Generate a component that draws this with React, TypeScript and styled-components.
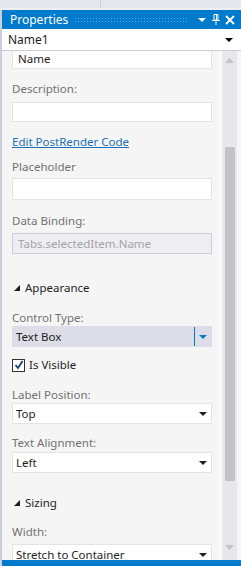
import React from 'react';
import styled, { createGlobalStyle } from 'styled-components';

const GlobalStyle = createGlobalStyle`
    html, body {
        margin: 0;
        padding: 0;
        background: #eeeef2;
    }
    * {
        box-sizing: border-box;
    }
`;

const FONT = `'Noto Sans', 'Open Sans', sans-serif`;
const SIZE = '11.5px';

const Window = styled.div`
    width: 241px;
    height: 566px;
    display: flex;
    flex-direction: column;
    font-family: ${FONT};
    overflow: hidden;
    background: #eeeef2;
`;

const TopStrip = styled.div`
    height: 10px;
    display: flex;
    background: #e6e7ed;
    border-bottom: 2px solid #eeeef2;
`;

const TopTab = styled.div`
    width: 101px;
    border-right: 1px solid #cccedb;
`;

const Panel = styled.div`
    flex: 1;
    display: flex;
    flex-direction: column;
    border-left: 2px solid #cccedb;
    min-height: 0;
`;

const TitleBar = styled.div`
    height: 19px;
    background: #007acc;
    display: flex;
    align-items: center;
    padding: 0 4px 0 8px;
    color: #fff;
`;

const Title = styled.span`
    font-size: 12px;
    line-height: 19px;
    margin-right: 6px;
`;

const Grip = styled.div`
    flex: 1;
    height: 5px;
    margin-right: 6px;
    background-image: radial-gradient(circle, #5ea9e0 0.6px, transparent 0.9px);
    background-size: 3px 3px;
`;

const TitleIcon = styled.div`
    width: 14px;
    height: 19px;
    display: flex;
    align-items: center;
    justify-content: center;
`;

const ObjectCombo = styled.div`
    height: 22px;
    background: #fff;
    border-bottom: 1px solid #cccedb;
    display: flex;
    align-items: center;
    justify-content: space-between;
    padding: 0 8px 0 6px;
    font-size: 12px;
    color: #1e1e1e;
`;

const Body = styled.div`
    flex: 1;
    display: flex;
    min-height: 0;
    background: #f5f5f5;
`;

const Scroller = styled.div`
    flex: 1;
    overflow: hidden;
    padding: 0 7px 0 10px;
`;

const ScrollBar = styled.div`
    width: 22px;
    display: flex;
    flex-direction: column;
    align-items: center;
    justify-content: space-between;
    padding: 7px 0 10px;
    border-left: 3px solid #fafafa;
    border-right: 4px solid #f5f5f5;
    background: #e8e8ec;
`;

const Thumb = styled.div`
    width: 10px;
    height: 334px;
    margin-top: 84px;
    margin-bottom: auto;
    background: #c2c3c9;
    border-radius: 1px;
`;

const Stack = styled.div<{ $offset: number }>`
    display: flex;
    flex-direction: column;
    margin-top: ${(p) => p.$offset}px;
`;

const Label = styled.div<{ $mt?: number; $mb?: number }>`
    font-size: ${SIZE};
    line-height: 16px;
    color: #717171;
    margin-top: ${(p) => p.$mt ?? 0}px;
    margin-bottom: ${(p) => p.$mb ?? 0}px;
`;

const Input = styled.div<{ $disabled?: boolean; $h?: number }>`
    height: ${(p) => p.$h ?? 21}px;
    background: ${(p) => (p.$disabled ? '#eeeef2' : '#ffffff')};
    border: 1px solid ${(p) => (p.$disabled ? '#cccedb' : '#e3e3e8')};
    font-size: ${SIZE};
    color: ${(p) => (p.$disabled ? '#a2a4a5' : '#1e1e1e')};
    padding: 0 5px;
    display: flex;
    align-items: center;
    flex-shrink: 0;
`;

const Select = styled.div<{ $active?: boolean }>`
    height: 21px;
    flex-shrink: 0;
    background: ${(p) => (p.$active ? '#dcdde6' : '#ffffff')};
    border: 1px solid ${(p) => (p.$active ? '#dcdde6' : '#e3e3e8')};
    font-size: ${SIZE};
    color: #1e1e1e;
    display: flex;
    align-items: center;
    padding-left: 3px;
`;

const SelectText = styled.span`
    flex: 1;
`;

const SelectButton = styled.div<{ $active?: boolean }>`
    width: 16px;
    height: 100%;
    display: flex;
    align-items: center;
    justify-content: center;
    border-left: 1px solid ${(p) => (p.$active ? '#007acc' : 'transparent')};
    margin-right: 1px;
`;

const Link = styled.a<{ $mt: number }>`
    font-size: ${SIZE};
    line-height: 16px;
    color: #1e6fb8;
    text-decoration: underline;
    margin-top: ${(p) => p.$mt}px;
`;

const Section = styled.div<{ $mt: number }>`
    display: flex;
    align-items: center;
    gap: 5px;
    padding-left: 2px;
    margin-top: ${(p) => p.$mt}px;
    font-size: ${SIZE};
    line-height: 16px;
    color: #1e1e1e;
`;

const CheckRow = styled.label`
    display: flex;
    align-items: center;
    gap: 4px;
    margin-top: 10px;
    font-size: ${SIZE};
    line-height: 16px;
    color: #1e1e1e;
`;

const Box = styled.span`
    width: 13px;
    height: 13px;
    border: 1px solid #333337;
    background: #fff;
    display: flex;
    align-items: center;
    justify-content: center;
`;

const BottomBar = styled.div`
    height: 6px;
    background: #007acc;
`;

const Caret = ({ color = '#1e1e1e' }: { color?: string }) => (
    <svg width="8" height="4" viewBox="0 0 8 4">
        <polygon points="0,0 8,0 4,4" fill={color} />
    </svg>
);

const Expander = () => (
    <svg width="6" height="6" viewBox="0 0 6 6">
        <polygon points="6,0 6,6 0,6" fill="#1e1e1e" />
    </svg>
);

const Arrow = ({ up }: { up?: boolean }) => (
    <svg width="9" height="5" viewBox="0 0 9 5">
        <polygon points={up ? '0,5 9,5 4.5,0' : '0,0 9,0 4.5,5'} fill="#c2c3c9" />
    </svg>
);

const Field = ({ label, value, mt, gap }: { label: string; value: string; mt: number; gap: number }) => (
    <>
        <Label $mt={mt} $mb={gap}>
            {label}
        </Label>
        <Select>
            <SelectText>{value}</SelectText>
            <SelectButton>
                <Caret />
            </SelectButton>
        </Select>
    </>
);

const App = () => {
    return (
        <Window>
            <GlobalStyle />
            <TopStrip>
                <TopTab />
            </TopStrip>
            <Panel>
                <TitleBar>
                    <Title>Properties</Title>
                    <Grip />
                    <TitleIcon>
                        <svg width="8" height="4" viewBox="0 0 8 4">
                            <polygon points="0,0 8,0 4,4" fill="#fff" />
                        </svg>
                    </TitleIcon>
                    <TitleIcon>
                        <svg width="8" height="11" viewBox="0 0 8 11">
                            <path d="M2 0.5 H6 V6 H2 Z M0 6.5 H8 M4 7 V11" stroke="#fff" strokeWidth="1" fill="none" />
                            <path d="M4.5 1 V6" stroke="#fff" strokeWidth="1" />
                        </svg>
                    </TitleIcon>
                    <TitleIcon>
                        <svg width="10" height="10" viewBox="0 0 10 10">
                            <path d="M1 1 L9 9 M9 1 L1 9" stroke="#fff" strokeWidth="1.8" />
                        </svg>
                    </TitleIcon>
                </TitleBar>
                <ObjectCombo>
                    <span>Name1</span>
                    <Caret color="#000" />
                </ObjectCombo>
                <Body>
                    <Scroller>
                        <Stack $offset={-3}>
                            <Input>Name</Input>

                            <Label $mt={12} $mb={5}>
                                Description:
                            </Label>
                            <Input $h={20} />

                            <Link $mt={12}>Edit PostRender Code</Link>

                            <Label $mt={9} $mb={3}>
                                Placeholder
                            </Label>
                            <Input $h={22} />

                            <Label $mt={13} $mb={4}>
                                Data Binding:
                            </Label>
                            <Input $disabled>Tabs.selectedItem.Name</Input>

                            <Section $mt={26}>
                                <Expander />
                                Appearance
                            </Section>

                            <Label $mt={14}>Control Type:</Label>
                            <Select $active>
                                <SelectText>Text Box</SelectText>
                                <SelectButton $active>
                                    <Caret color="#007acc" />
                                </SelectButton>
                            </Select>

                            <CheckRow>
                                <Box>
                                    <svg width="10" height="10" viewBox="0 0 10 10">
                                        <path d="M1.5 5 L4 8 L8.5 1" stroke="#1e3c78" strokeWidth="1.8" fill="none" />
                                    </svg>
                                </Box>
                                Is Visible
                            </CheckRow>

                            <Field label="Label Position:" value="Top" mt={14} gap={0} />
                            <Field label="Text Alignment:" value="Left" mt={11} gap={1} />

                            <Section $mt={22}>
                                <Expander />
                                Sizing
                            </Section>

                            <Field label="Width:" value="Stretch to Container" mt={13} gap={4} />
                        </Stack>
                    </Scroller>
                    <ScrollBar>
                        <Arrow up />
                        <Thumb />
                        <Arrow />
                    </ScrollBar>
                </Body>
                <BottomBar />
            </Panel>
        </Window>
    );
};

export default App;
